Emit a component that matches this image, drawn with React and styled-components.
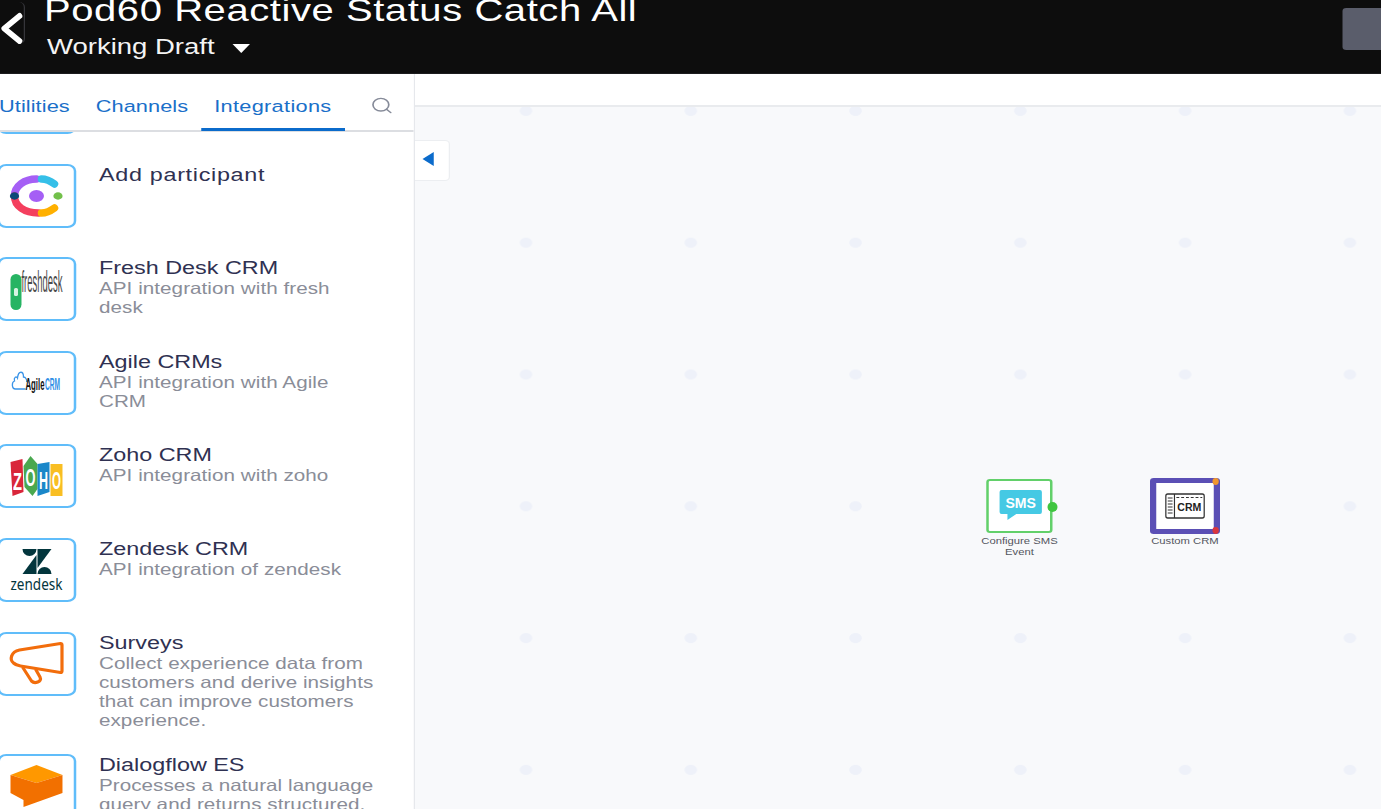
import React from "react";
import styled, { createGlobalStyle } from "styled-components";
import { Search } from "lucide-react";

const K = 1.25;
const sx = (v) => `${v / K}px`;

const Global = createGlobalStyle`
  html, body { margin: 0; padding: 0; overflow: hidden; background: #f8f9fb; }
  body { font-family: "Liberation Sans", Arial, sans-serif; }
`;

const Stage = styled.div`
  width: ${sx(1381)};
  height: 809px;
  transform: scaleX(${K});
  transform-origin: 0 0;
  display: flex;
  flex-direction: column;
  overflow: hidden;
`;

const Header = styled.header`
  flex: 0 0 74px;
  height: 74px;
  box-sizing: border-box;
  background: #0d0d0d;
  border-bottom: 1px solid #1c1c1e;
  display: flex;
  align-items: flex-start;
  overflow: hidden;
`;
const Back = styled.div`
  width: ${sx(25)};
  height: 42px;
  margin-top: 2px;
  box-sizing: border-box;
  border-right: 1px solid #35353a;
  border-radius: 0 5px 5px 0;
  flex: none;
  svg { display: block; width: 100%; height: 100%; }
`;
const TitleGroup = styled.div`
  margin-left: ${sx(19)};
  margin-top: -8px;
  display: flex;
  flex-direction: column;
`;
const Title = styled.div`
  color: #fff;
  font-size: 32px;
  letter-spacing: 0.45px;
  line-height: 36px;
  white-space: nowrap;
`;
const Draft = styled.div`
  margin-top: 6px;
  margin-left: ${sx(3)};
  color: #f4f4f4;
  font-size: 22px;
  line-height: 26px;
  display: flex;
  align-items: center;
  gap: ${sx(18)};
`;
const Caret = styled.span`
  width: 0;
  height: 0;
  margin-top: 2px;
  border-left: ${sx(9)} solid transparent;
  border-right: ${sx(9)} solid transparent;
  border-top: 9px solid #fff;
`;
const Square = styled.div`
  margin-left: auto;
  margin-top: 8px;
  width: ${sx(38)};
  height: 42px;
  background: #5a5d6b;
  border-radius: 3px 0 0 3px;
`;

const Body = styled.div`
  flex: 1;
  display: flex;
  min-height: 0;
`;
const Sidebar = styled.aside`
  width: ${sx(415)};
  flex: none;
  box-sizing: border-box;
  background: #fff;
  border-right: 1px solid #e6e8ec;
  display: flex;
  flex-direction: column;
  overflow: hidden;
`;
const Tabs = styled.nav`
  flex: 0 0 58px;
  height: 58px;
  box-sizing: border-box;
  border-bottom: 2px solid #dcdee2;
  display: flex;
  align-items: stretch;
  margin-left: ${sx(-14)};
  position: relative;
  background: #fff;
  z-index: 1;
`;
const Tab = styled.div`
  padding: 0 ${sx(13)};
  font-size: 17.4px;
  letter-spacing: ${(p) => (p.$active ? "0.25px" : "0.06px")};
  line-height: 20px;
  color: #1a6fc9;
  display: flex;
  align-items: center;
  padding-top: 9px;
  box-sizing: border-box;
  height: 57px;
  border-bottom: 3px solid ${(p) => (p.$active ? "#0b6bcb" : "transparent")};
`;
const SearchBtn = styled.div`
  margin-left: ${sx(25)};
  margin-top: 22px;
  color: #868b99;
  svg { display: block; }
`;
const List = styled.div`
  flex: 1;
  min-height: 0;
  overflow: hidden;
  display: flex;
  flex-direction: column;
  margin-top: -62px;
`;
const Row = styled.div`
  flex: none;
  display: flex;
  align-items: flex-start;
  gap: ${sx(23)};
  min-height: 93.6px;
  box-sizing: border-box;
  padding-bottom: 24px;
  margin-left: ${sx(-3)};
`;
const IconBox = styled.div`
  width: ${sx(79)};
  height: 64px;
  flex: none;
  box-sizing: border-box;
  background: #fff;
  border: 2px solid #60bdfa;
  border-radius: 7px;
  position: relative;
  overflow: hidden;
  svg { position: absolute; left: -2px; top: -2px; width: ${sx(79)}; height: 64px; display: block; }
`;
const Text = styled.div`
  width: ${sx(278)};
  padding-top: 1px;
`;
const RowTitle = styled.div`
  color: #2f3152;
  font-size: 18.7px;
  letter-spacing: ${(p) => (p.$wide ? "0.55px" : "0")};
  line-height: 20px;
`;
const RowDesc = styled.div`
  color: #8a8d98;
  font-size: 16.5px;
  letter-spacing: 0.04px;
  line-height: 19px;
  margin-top: 1px;
`;

const Main = styled.main`
  flex: 1;
  position: relative;
  display: flex;
  flex-direction: column;
  min-width: 0;
`;
const CanvasBar = styled.div`
  flex: 0 0 33px;
  box-sizing: border-box;
  background: #fff;
  border-bottom: 2px solid #e9ebee;
`;
const Canvas = styled.div`
  flex: 1;
  position: relative;
  background-color: #f8f9fb;
  background-image: radial-gradient(circle at center, #eef1f9 4.6px, transparent 5.4px);
  background-size: ${sx(164.8)} 131.8px;
  background-position: ${sx(28.6)} -62px;
`;
const Collapse = styled.div`
  position: absolute;
  left: 0;
  top: 33px;
  width: ${sx(35)};
  height: 41px;
  box-sizing: border-box;
  background: #fff;
  border: 1px solid #eceef1;
  border-left: none;
  border-radius: 0 4px 4px 0;
  display: flex;
  align-items: center;
  justify-content: center;
  padding-right: ${sx(7)};
`;
const Left = styled.span`
  width: 0;
  height: 0;
  margin-top: -4px;
  border-top: 7px solid transparent;
  border-bottom: 7px solid transparent;
  border-right: ${sx(12)} solid #0b6bcb;
`;

const Node = styled.div`
  position: absolute;
  left: ${(p) => sx(p.$x - 415)};
  top: ${(p) => p.$y - 107}px;
  width: ${(p) => sx(p.$w)};
  display: flex;
  flex-direction: column;
  align-items: center;
`;
const NodeBox = styled.div`
  position: relative;
  width: ${(p) => sx(p.$bw)};
  height: ${(p) => p.$bh}px;
  box-sizing: border-box;
  background: #fff;
  border-radius: 3px;
  border: ${(p) => p.$border};
  svg { position: absolute; display: block; }
`;
const Dot = styled.span`
  position: absolute;
  width: ${(p) => sx(p.$s)};
  height: ${(p) => p.$s}px;
  border-radius: 50%;
  background: ${(p) => p.$c};
  ${(p) => p.$css}
`;
const NodeLabel = styled.div`
  color: #54565e;
  font-size: 9px;
  line-height: 10.5px;
  text-align: center;
  margin-top: ${(p) => p.$mt}px;
`;

const Logo = ({ children }) => (
  <svg viewBox="-3 0 79 64" preserveAspectRatio="none">{children}</svg>
);

const ConvLogo = () => (
  <Logo>
    <g fill="none" strokeWidth="7.5" strokeLinecap="round">
      <path d="M14 32C14 22 24 15 36 15" stroke="#a55ff5" />
      <path d="M41 15C47 15 50 17 54 20" stroke="#35bfe8" />
      <path d="M14 32C14 42 24 49 38 49" stroke="#f43f5e" />
      <path d="M41 49C46 49 50 47 54 44" stroke="#ffb000" />
    </g>
    <ellipse cx="36" cy="32" rx="7.5" ry="6" fill="#a55ff5" />
    <ellipse cx="57.5" cy="32" rx="4.6" ry="3.7" fill="#72c04a" />
    <ellipse cx="14" cy="32" rx="4.6" ry="3.7" fill="#0d4a78" />
  </Logo>
);
const FreshLogo = () => (
  <Logo>
    <rect x="10" y="17" width="11" height="36" rx="5.5" fill="#27b463" />
    <rect x="13.5" y="31" width="4" height="8" rx="1.5" fill="#d8f3e2" />
    <text x="21" y="35" fontSize="29" fontFamily="Liberation Sans, sans-serif" fill="#4a4a4a" textLength="41" lengthAdjust="spacingAndGlyphs">freshdesk</text>
  </Logo>
);
const AgileLogo = () => (
  <Logo>
    <path d="M25 38H15C11 38 11 31 14 30C13 26 16 25 17 27C18 19 23 20 23 26C25 26 27 29 26 31" fill="none" stroke="#3a94e8" strokeWidth="1.3" />
    <text x="25" y="39" fontSize="17" fontWeight="700" fontFamily="Liberation Sans, sans-serif" fill="#111" textLength="19" lengthAdjust="spacingAndGlyphs">Agile</text>
    <text x="44.5" y="39" fontSize="17" fontWeight="700" fontFamily="Liberation Sans, sans-serif" fill="#2e8fe6" textLength="15" lengthAdjust="spacingAndGlyphs">CRM</text>
  </Logo>
);
const ZohoLogo = () => {
  const letter = { fontFamily: "Liberation Sans, sans-serif", fontWeight: 700, fill: "#fff", lengthAdjust: "spacingAndGlyphs" };
  return (
    <Logo>
      <polygon points="10,18 22,15 23,48 12,52" fill="#d9263a" />
      <polygon points="23,22 30,12 37,20 37,45 32,52 24,43" fill="#4aa84f" />
      <polygon points="37,20 49,18 49,48 37,52" fill="#1a87c9" />
      <polygon points="50,20 62,20 62,52 50,52" fill="#f9be22" />
      <text x="12.5" y="46" fontSize="24" textLength="9" {...letter}>Z</text>
      <text x="25" y="42" fontSize="23" textLength="10" {...letter}>O</text>
      <text x="38.5" y="45" fontSize="23" textLength="9" {...letter}>H</text>
      <text x="51.5" y="45" fontSize="23" textLength="9" {...letter}>O</text>
    </Logo>
  );
};
const ZendeskLogo = () => (
  <Logo>
    <path d="M22 11H36A7 7 0 0 1 22 11Z" fill="#03363d" />
    <polygon points="36,17 36,36 22,36" fill="#03363d" />
    <polygon points="37,11 51,11 37,30" fill="#03363d" />
    <path d="M37 36A7 7 0 0 1 51 36Z" fill="#03363d" />
    <text x="10" y="52" fontSize="15.5" fontFamily="Noto Sans, sans-serif" fill="#03363d" textLength="52" lengthAdjust="spacingAndGlyphs">zendesk</text>
  </Logo>
);
const SurveyLogo = () => (
  <Logo>
    <path d="M60 11.5 19 18C10 20 9 28 13 31C15 33 17 33.5 20 34L60 40.5C61 40.5 61.5 40 61.5 39V13C61.5 12 61 11.5 60 11.5Z" fill="none" stroke="#f26d0c" strokeWidth="3.2" strokeLinejoin="round" />
    <path d="M22 35 31 49C34 52 42 50 39.5 45L35 37" fill="none" stroke="#f26d0c" strokeWidth="3.2" strokeLinejoin="round" />
  </Logo>
);
const DialogLogo = () => (
  <Logo>
    <polygon points="36,11 62,21 36,29 10,21" fill="#ff9800" />
    <polygon points="10,21 36,29 62,21 62,39 23,53 23,46 10,39" fill="#f27000" />
  </Logo>
);

const rows = [
  { title: "", desc: "", Icon: () => null },
  { title: "Add participant", desc: "", Icon: ConvLogo, wide: true },
  { title: "Fresh Desk CRM", desc: "API integration with fresh desk", Icon: FreshLogo },
  { title: "Agile CRMs", desc: "API integration with Agile CRM", Icon: AgileLogo },
  { title: "Zoho CRM", desc: "API integration with zoho", Icon: ZohoLogo },
  { title: "Zendesk CRM", desc: "API integration of zendesk", Icon: ZendeskLogo },
  { title: "Surveys", desc: "Collect experience data from customers and derive insights that can improve customers experience.", Icon: SurveyLogo },
  { title: "Dialogflow ES", desc: "Processes a natural language query and returns structured, actionable data.", Icon: DialogLogo },
];

export default function App() {
  return (
    <>
      <Global />
      <Stage>
        <Header>
          <Back>
            <svg viewBox="0 0 25 42" preserveAspectRatio="none">
              <path d="M20.5 14 4.5 26.5 20.5 39" fill="none" stroke="#fff" strokeWidth="6" strokeLinecap="round" strokeLinejoin="round" />
            </svg>
          </Back>
          <TitleGroup>
            <Title>Pod60 Reactive Status Catch All</Title>
            <Draft>
              Working Draft
              <Caret />
            </Draft>
          </TitleGroup>
          <Square />
        </Header>
        <Body>
          <Sidebar>
            <Tabs>
              <Tab>Utilities</Tab>
              <Tab>Channels</Tab>
              <Tab $active>Integrations</Tab>
              <SearchBtn>
                <Search size={19} strokeWidth={1.7} />
              </SearchBtn>
            </Tabs>
            <List>
              {rows.map(({ title, desc, Icon, wide }, i) => (
                <Row key={i}>
                  <IconBox>
                    <Icon />
                  </IconBox>
                  <Text>
                    <RowTitle $wide={wide}>{title}</RowTitle>
                    <RowDesc>{desc}</RowDesc>
                  </Text>
                </Row>
              ))}
            </List>
          </Sidebar>
          <Main>
            <CanvasBar />
            <Canvas>
              <Collapse>
                <Left />
              </Collapse>
              <Node $x={977.5} $y={479} $w={84}>
                <NodeBox $bw={67} $bh={54} $border="2px solid #62d06a">
                  <svg viewBox="0 0 63 50" preserveAspectRatio="none" style={{ inset: 0, width: "100%", height: "100%" }}>
                    <path d="M13 9H52Q54 9 54 11V31Q54 33 52 33H28L19 39V33H13Q11 33 11 31V11Q11 9 13 9Z" fill="#45c9e4" />
                    <text x="17" y="27" fontSize="14" fontWeight="700" fontFamily="Liberation Sans, sans-serif" fill="#fff" textLength="31" lengthAdjust="spacingAndGlyphs">SMS</text>
                  </svg>
                  <Dot $s={10} $c="#3fc53f" $css={`right: ${sx(-7)}; top: 21px;`} />
                </NodeBox>
                <NodeLabel $mt={3}>
                  Configure SMS
                  <br />
                  Event
                </NodeLabel>
              </Node>
              <Node $x={1145} $y={478} $w={80}>
                <NodeBox $bw={71} $bh={56} $border="5px solid #5b4fb5">
                  <svg viewBox="0 0 61 46" preserveAspectRatio="none" style={{ inset: 0, width: "100%", height: "100%" }}>
                    <rect x="10" y="11" width="40" height="24" rx="2" fill="none" stroke="#333" strokeWidth="1.3" />
                    <path d="M19 11V35" stroke="#333" strokeWidth="1.2" />
                    <path d="M12 15H17M12 18H17M12 21H17M12 24H17M12 27H17M12 30H17" stroke="#333" strokeWidth="1.2" />
                    <path d="M21 14.5H48" stroke="#333" strokeWidth="1.2" strokeDasharray="3 2" />
                    <text x="22" y="28" fontSize="11" fontWeight="700" fontFamily="Liberation Sans, sans-serif" fill="#222" textLength="25" lengthAdjust="spacingAndGlyphs">CRM</text>
                  </svg>
                  <Dot $s={7} $c="#f0962e" $css={`right: ${sx(-5)}; top: -5px;`} />
                  <Dot $s={7} $c="#d9363e" $css={`right: ${sx(-5)}; bottom: -5px;`} />
                </NodeBox>
                <NodeLabel $mt={2}>Custom CRM</NodeLabel>
              </Node>
            </Canvas>
          </Main>
        </Body>
      </Stage>
    </>
  );
}
